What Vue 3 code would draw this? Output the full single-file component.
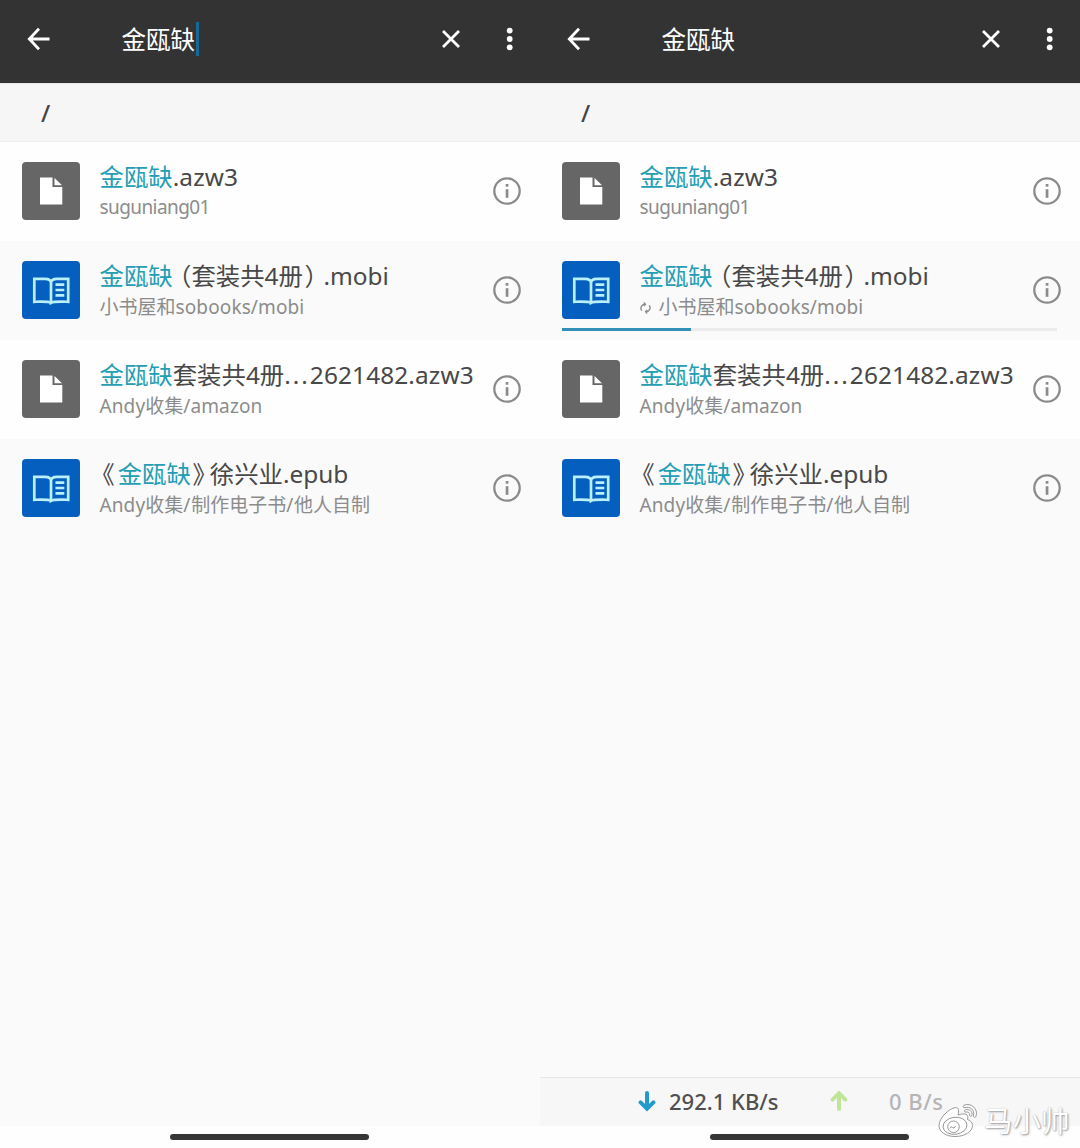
<script setup>
const files = (over) => [
  {
    kind: 'file',
    title: [{ t: '金瓯缺', c: 'hit' }, { t: '.azw3', c: 'latin wide' }],
    path: [{ t: 'suguniang01', c: 'latin tight' }],
  },
  {
    kind: 'book',
    title: [
      { t: '金瓯缺', c: 'hit' },
      { t: '（', c: 'half open' },
      { t: '套装共' },
      { t: '4', c: 'latin' },
      { t: '册' },
      { t: '）', c: 'half close' },
      { t: '.mobi', c: 'latin' },
    ],
    path: [{ t: '小书屋和' }, { t: 'sobooks/mobi', c: 'latin airy' }],
    ...over,
  },
  {
    kind: 'file',
    title: [
      { t: '金瓯缺', c: 'hit' },
      { t: '套装共' },
      { t: '4', c: 'latin' },
      { t: '册' },
      { t: '...', c: 'latin dots' },
      { t: '2621482.azw3', c: 'latin wide' },
    ],
    path: [{ t: 'Andy', c: 'latin airy' }, { t: '收集' }, { t: '/amazon', c: 'latin airy' }],
  },
  {
    kind: 'book',
    title: [
      { t: '《', c: 'half lead' },
      { t: '金瓯缺', c: 'hit' },
      { t: '》', c: 'half shut' },
      { t: '徐兴业' },
      { t: '.epub', c: 'latin' },
    ],
    path: [
      { t: 'Andy', c: 'latin airy' },
      { t: '收集' },
      { t: '/', c: 'latin slash' },
      { t: '制作电子书' },
      { t: '/', c: 'latin slash' },
      { t: '他人自制' },
    ],
  },
]

const panels = [
  { id: 'search', editing: true, rows: files({}) },
  { id: 'download', speed: true, rows: files({ progress: 26.1 }) },
]
</script>

<template>
  <div class="screens">
    <section v-for="p in panels" :key="p.id" class="panel">
      <header class="bar">
        <svg class="back" width="24" height="24" viewBox="0 0 24 24">
          <path d="M23.500 12H4M13 1.800L3.300 12L13 22.200" />
        </svg>
        <span class="query">金瓯缺</span>
        <i class="caret" :class="{ on: p.editing }"></i>
        <svg class="clear" width="20" height="20" viewBox="0 0 20 20">
          <path d="M2 2L18 18M18 2L2 18" />
        </svg>
        <svg class="more" width="8" height="24" viewBox="0 0 8 24">
          <circle cx="3.7" cy="3.6" r="2.9" />
          <circle cx="3.7" cy="12" r="2.9" />
          <circle cx="3.7" cy="20.3" r="2.9" />
        </svg>
      </header>
      <div class="crumb">/</div>
      <div v-for="(r, i) in p.rows" :key="i" class="row" :class="r.kind">
        <div class="tile">
          <svg v-if="r.kind === 'file'" width="58" height="58" viewBox="0 0 58 58">
            <path fill="#fff" d="M18 15.500h12.500v9.500h9.800v17.500H18z" />
            <path fill="#fff" d="M32.500 16L40 23.200H32.500z" />
          </svg>
          <svg v-else class="pages" width="58" height="58" viewBox="0 0 58 58">
            <path d="M29 41.800C26.500 40.300 20 40.600 12.300 40.800V17.800H23Q29 17.800 29 22Q29 17.800 35 17.800H46.200V40.800C38 40.600 31.500 40.300 29 41.800V21" />
            <path d="M33.500 23.600H42.300M33.500 29H42.300M33.500 34.400H42.300" />
          </svg>
        </div>
        <div class="text">
          <div class="title">
            <span v-for="(s, k) in r.title" :key="k" :class="s.c">{{ s.t }}</span>
          </div>
          <div class="path">
            <svg v-if="r.progress" class="sync" width="11" height="12" viewBox="0 0 11 12">
              <path d="M1.800 8.600A4 4 0 0 1 4.800 2.200M9.200 3.400A4 4 0 0 1 6.200 9.800M3.800 .6L5.400 2.200L4 4M7.200 11.400L5.600 9.800L7 8" />
            </svg>
            <span v-for="(s, k) in r.path" :key="k" :class="s.c">{{ s.t }}</span>
          </div>
        </div>
        <svg class="info" width="28" height="28" viewBox="0 0 28 28">
          <circle cx="14" cy="14" r="12.7" fill="none" stroke="#8b8b8b" stroke-width="2.3" />
          <rect x="12.7" y="7" width="2.7" height="2.7" fill="#8b8b8b" />
          <rect x="12.7" y="12.2" width="2.7" height="8.6" fill="#8b8b8b" />
        </svg>
        <div v-if="r.progress" class="track">
          <div class="fill" :style="{ width: r.progress + '%' }"></div>
        </div>
      </div>
      <div class="space"></div>
      <div v-if="p.speed" class="speed">
        <svg width="18" height="22" viewBox="0 0 18 22" stroke="#2399cd">
          <path d="M9 3V18M2.600 12.400L9 18.600L15.400 12.400" />
        </svg>
        <span class="down">292.1 KB/s</span>
        <svg width="18" height="22" viewBox="0 0 18 22" stroke="#bfe596">
          <path d="M9 19V4M2.600 9.600L9 3.400L15.400 9.600" />
        </svg>
        <span class="up">0 B/s</span>
      </div>
      <footer class="nav"><i></i></footer>
    </section>
    <div class="mark">
      <svg width="42" height="36" viewBox="0 0 42 36">
        <g fill="#fff" stroke="#8d8d8d" stroke-width=".9">
          <path d="M18.500 5.500C12 6.500 2 16 2 23.500C2 30 9 34.500 18 34.500C28 34.500 35.500 29.500 35.500 23.500C35.500 20 33 18.500 30.500 17.500C32 12.500 28.500 10.500 21 13C22 9 22 5.500 18.500 5.500Z" />
          <ellipse cx="18" cy="23.800" rx="12" ry="8.500" transform="rotate(-7 18 23.8)" />
          <circle cx="16.500" cy="24.800" r="5.800" />
          <path d="M13 26.500q1-3 2.500-1t3-1.500" fill="none" />
          <path d="M27 3.200C34 .2 41.500 7 39 14.200C38.500 16 36 15.400 36.500 13.500C38 8 33 4 28 5.600C26.200 6 25.500 4 27 3.200Z" />
          <path d="M28.300 7.800C32 6.800 36 9.500 34.900 13.300C34.500 15 32.300 14.400 32.600 12.800C33 10.600 31 9.600 29 10.100C27.200 10.300 26.800 8.300 28.300 7.800Z" />
        </g>
      </svg>
      <span>马小帅</span>
    </div>
  </div>
</template>

<style>
body {
  margin: 0;
}
</style>

<style scoped>
.screens {
  position: relative;
  display: flex;
  width: 1080px;
  height: 1148px;
  overflow: hidden;
  background: #fafafa;
  font-family: "Noto Sans CJK SC", sans-serif;
}
.panel {
  display: flex;
  flex-direction: column;
  width: 540px;
  height: 1148px;
}
.bar {
  display: flex;
  align-items: center;
  box-sizing: border-box;
  height: 83px;
  padding: 0 26px 5px;
  background: #333;
  color: #fff;
  flex: none;
}
.bar svg {
  flex: none;
  fill: none;
  stroke: #fff;
  stroke-width: 2.8;
}
.bar .more {
  fill: #fff;
  stroke: none;
  margin-left: 45px;
}
.query {
  margin-left: 71.5px;
  font-size: 24.5px;
  line-height: 36px;
}
.caret {
  width: 3px;
  height: 34px;
  margin-left: 0.5px;
}
.caret.on {
  background: #14699b;
}
.clear {
  margin-left: auto;
}
.crumb {
  box-sizing: border-box;
  flex: none;
  height: 59px;
  padding-left: 41px;
  background: #f6f6f6;
  border-top: 1px solid #e8e8e8;
  border-bottom: 1px solid #eee;
  font: 500 24px/57px "Noto Sans", sans-serif;
  color: #444;
}
.row {
  position: relative;
  display: flex;
  align-items: center;
  box-sizing: border-box;
  flex: none;
  height: 99px;
  padding: 0 19px 2px 22px;
  background: #fefefe;
}
.row.book {
  background: #fafafa;
}
.tile {
  flex: none;
  width: 58px;
  height: 58px;
  border-radius: 4px;
  background: #666;
}
.tile svg {
  display: block;
}
.book .tile {
  background: #055fbe;
}
.pages {
  fill: none;
  stroke: #b9f0fb;
  stroke-width: 2.7;
}
.text {
  flex: 1;
  margin-left: 19.5px;
  padding-bottom: 1px;
  white-space: nowrap;
}
.title,
.path {
  display: flex;
  align-items: baseline;
}
.title {
  height: 33px;
  font-size: 24.4px;
  line-height: 31px;
  color: #484848;
}
.path {
  height: 28px;
  font-size: 19px;
  line-height: 28px;
  color: #8c8c8c;
}
.latin {
  font-family: "Noto Sans", sans-serif;
}
.wide {
  letter-spacing: 0.12px;
}
.airy {
  letter-spacing: 0.12px;
}
.slash {
  padding-right: 0.8px;
}
.tight {
  letter-spacing: -0.58px;
}
.hit {
  color: #249eb5;
}
.half {
  font-feature-settings: "halt";
}
.open {
  padding-left: 6.5px;
}
.close {
  padding: 0 6.8px 0 1.5px;
}
.lead {
  padding: 0 3px;
}
.shut {
  padding: 0 5px 0 1.7px;
}
.dots {
  letter-spacing: 2px;
}
.sync {
  margin-right: 8px;
  fill: none;
  stroke: #8c8c8c;
  stroke-width: 1.4;
}
.info {
  flex: none;
}
.track {
  position: absolute;
  left: 22px;
  right: 23px;
  bottom: 9px;
  height: 3px;
  background: #ebebeb;
}
.fill {
  height: 3px;
  background: #3290b8;
}
.space {
  flex: 1;
}
.speed {
  display: flex;
  align-items: center;
  box-sizing: border-box;
  height: 49px;
  padding: 0 0 3px 98px;
  background: #f7f7f7;
  border-top: 1px solid #e6e6e6;
  font: 500 22px/30px "Noto Sans", sans-serif;
}
.speed svg {
  flex: none;
  fill: none;
  stroke-width: 4;
  stroke-linecap: round;
}
.down {
  width: 161px;
  margin-left: 13px;
  color: #505050;
}
.up {
  margin-left: 41px;
  letter-spacing: 0.5px;
  color: #b5b5b5;
}
.nav {
  display: flex;
  justify-content: center;
  flex: none;
  height: 22px;
  background: #fefefe;
}
.nav i {
  width: 199px;
  height: 6px;
  margin: 8px 0 0 -1px;
  border-radius: 3px;
  background: #363636;
}
.mark {
  position: absolute;
  left: 937px;
  top: 1102px;
  display: flex;
  align-items: center;
  font-size: 28.5px;
  line-height: 36px;
  color: #fff;
  text-shadow: 1px 1px 2px #999, 0 0 1px #aaa;
}
.mark span {
  margin-left: 5px;
}
</style>
